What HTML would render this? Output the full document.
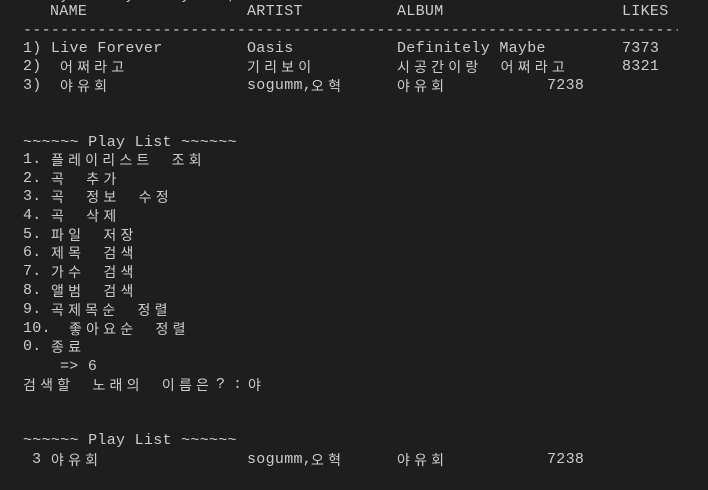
<!DOCTYPE html>
<html><head><meta charset="utf-8"><style>
body{margin:0;width:708px;height:490px;background:#1e1e1e;overflow:hidden;position:relative;color:#cccccc;font-family:"Liberation Mono","Noto Sans CJK KR",monospace;font-size:15px;letter-spacing:0.3px}
span{position:absolute;white-space:pre;line-height:18px}
.k{font-family:"Noto Sans CJK KR","Liberation Mono",sans-serif;letter-spacing:4.2px;font-size:14px}
</style></head><body>
<span style="left:23px;top:-13px">   by     by    by    ,</span>
<span style="left:50px;top:3px">NAME</span>
<span style="left:247px;top:3px">ARTIST</span>
<span style="left:397px;top:3px">ALBUM</span>
<span style="left:622px;top:3px">LIKES</span>
<span style="left:23px;top:22px;width:655px;overflow:hidden">------------------------------------------------------------------------------------</span>
<span style="left:23px;top:40px">1) Live Forever</span>
<span style="left:247px;top:40px">Oasis</span>
<span style="left:397px;top:40px">Definitely Maybe</span>
<span style="left:622px;top:40px">7373</span>
<span style="left:23px;top:58px">2)</span><span class="k" style="left:60px;top:58px">어쩌라고</span>
<span class="k" style="left:247px;top:58px">기리보이</span>
<span class="k" style="left:397px;top:58px">시공간이랑　어쩌라고</span>
<span style="left:622px;top:58px">8321</span>
<span style="left:23px;top:77px">3)</span><span class="k" style="left:60px;top:77px">야유회</span>
<span style="left:247px;top:77px">sogumm,</span><span class="k" style="left:311px;top:77px">오혁</span>
<span class="k" style="left:397px;top:77px">야유회</span>
<span style="left:547px;top:77px">7238</span>

<span style="left:23px;top:134px">~~~~~~ Play List ~~~~~~</span>
<span style="left:23px;top:151px">1.</span><span class="k" style="left:51px;top:151px">플레이리스트　조회</span>
<span style="left:23px;top:170px">2.</span><span class="k" style="left:51px;top:170px">곡　추가</span>
<span style="left:23px;top:188px">3.</span><span class="k" style="left:51px;top:188px">곡　정보　수정</span>
<span style="left:23px;top:207px">4.</span><span class="k" style="left:51px;top:207px">곡　삭제</span>
<span style="left:23px;top:226px">5.</span><span class="k" style="left:51px;top:226px">파일　저장</span>
<span style="left:23px;top:244px">6.</span><span class="k" style="left:51px;top:244px">제목　검색</span>
<span style="left:23px;top:263px">7.</span><span class="k" style="left:51px;top:263px">가수　검색</span>
<span style="left:23px;top:282px">8.</span><span class="k" style="left:51px;top:282px">앨범　검색</span>
<span style="left:23px;top:301px">9.</span><span class="k" style="left:51px;top:301px">곡제목순　정렬</span>
<span style="left:23px;top:320px">10.</span><span class="k" style="left:69px;top:320px">좋아요순　정렬</span>
<span style="left:23px;top:338px">0.</span><span class="k" style="left:51px;top:338px">종료</span>
<span style="left:60px;top:358px">=&gt; 6</span>
<span class="k" style="left:23px;top:376px">검색할　노래의　이름은</span>
<span style="left:216px;top:376px">?</span><span style="left:233px;top:376px">:</span><span class="k" style="left:248px;top:376px">야</span>

<span style="left:23px;top:432px">~~~~~~ Play List ~~~~~~</span>
<span style="left:32px;top:451px">3</span><span class="k" style="left:51px;top:451px">야유회</span>
<span style="left:247px;top:451px">sogumm,</span><span class="k" style="left:311px;top:451px">오혁</span>
<span class="k" style="left:397px;top:451px">야유회</span>
<span style="left:547px;top:451px">7238</span>
</body></html>
